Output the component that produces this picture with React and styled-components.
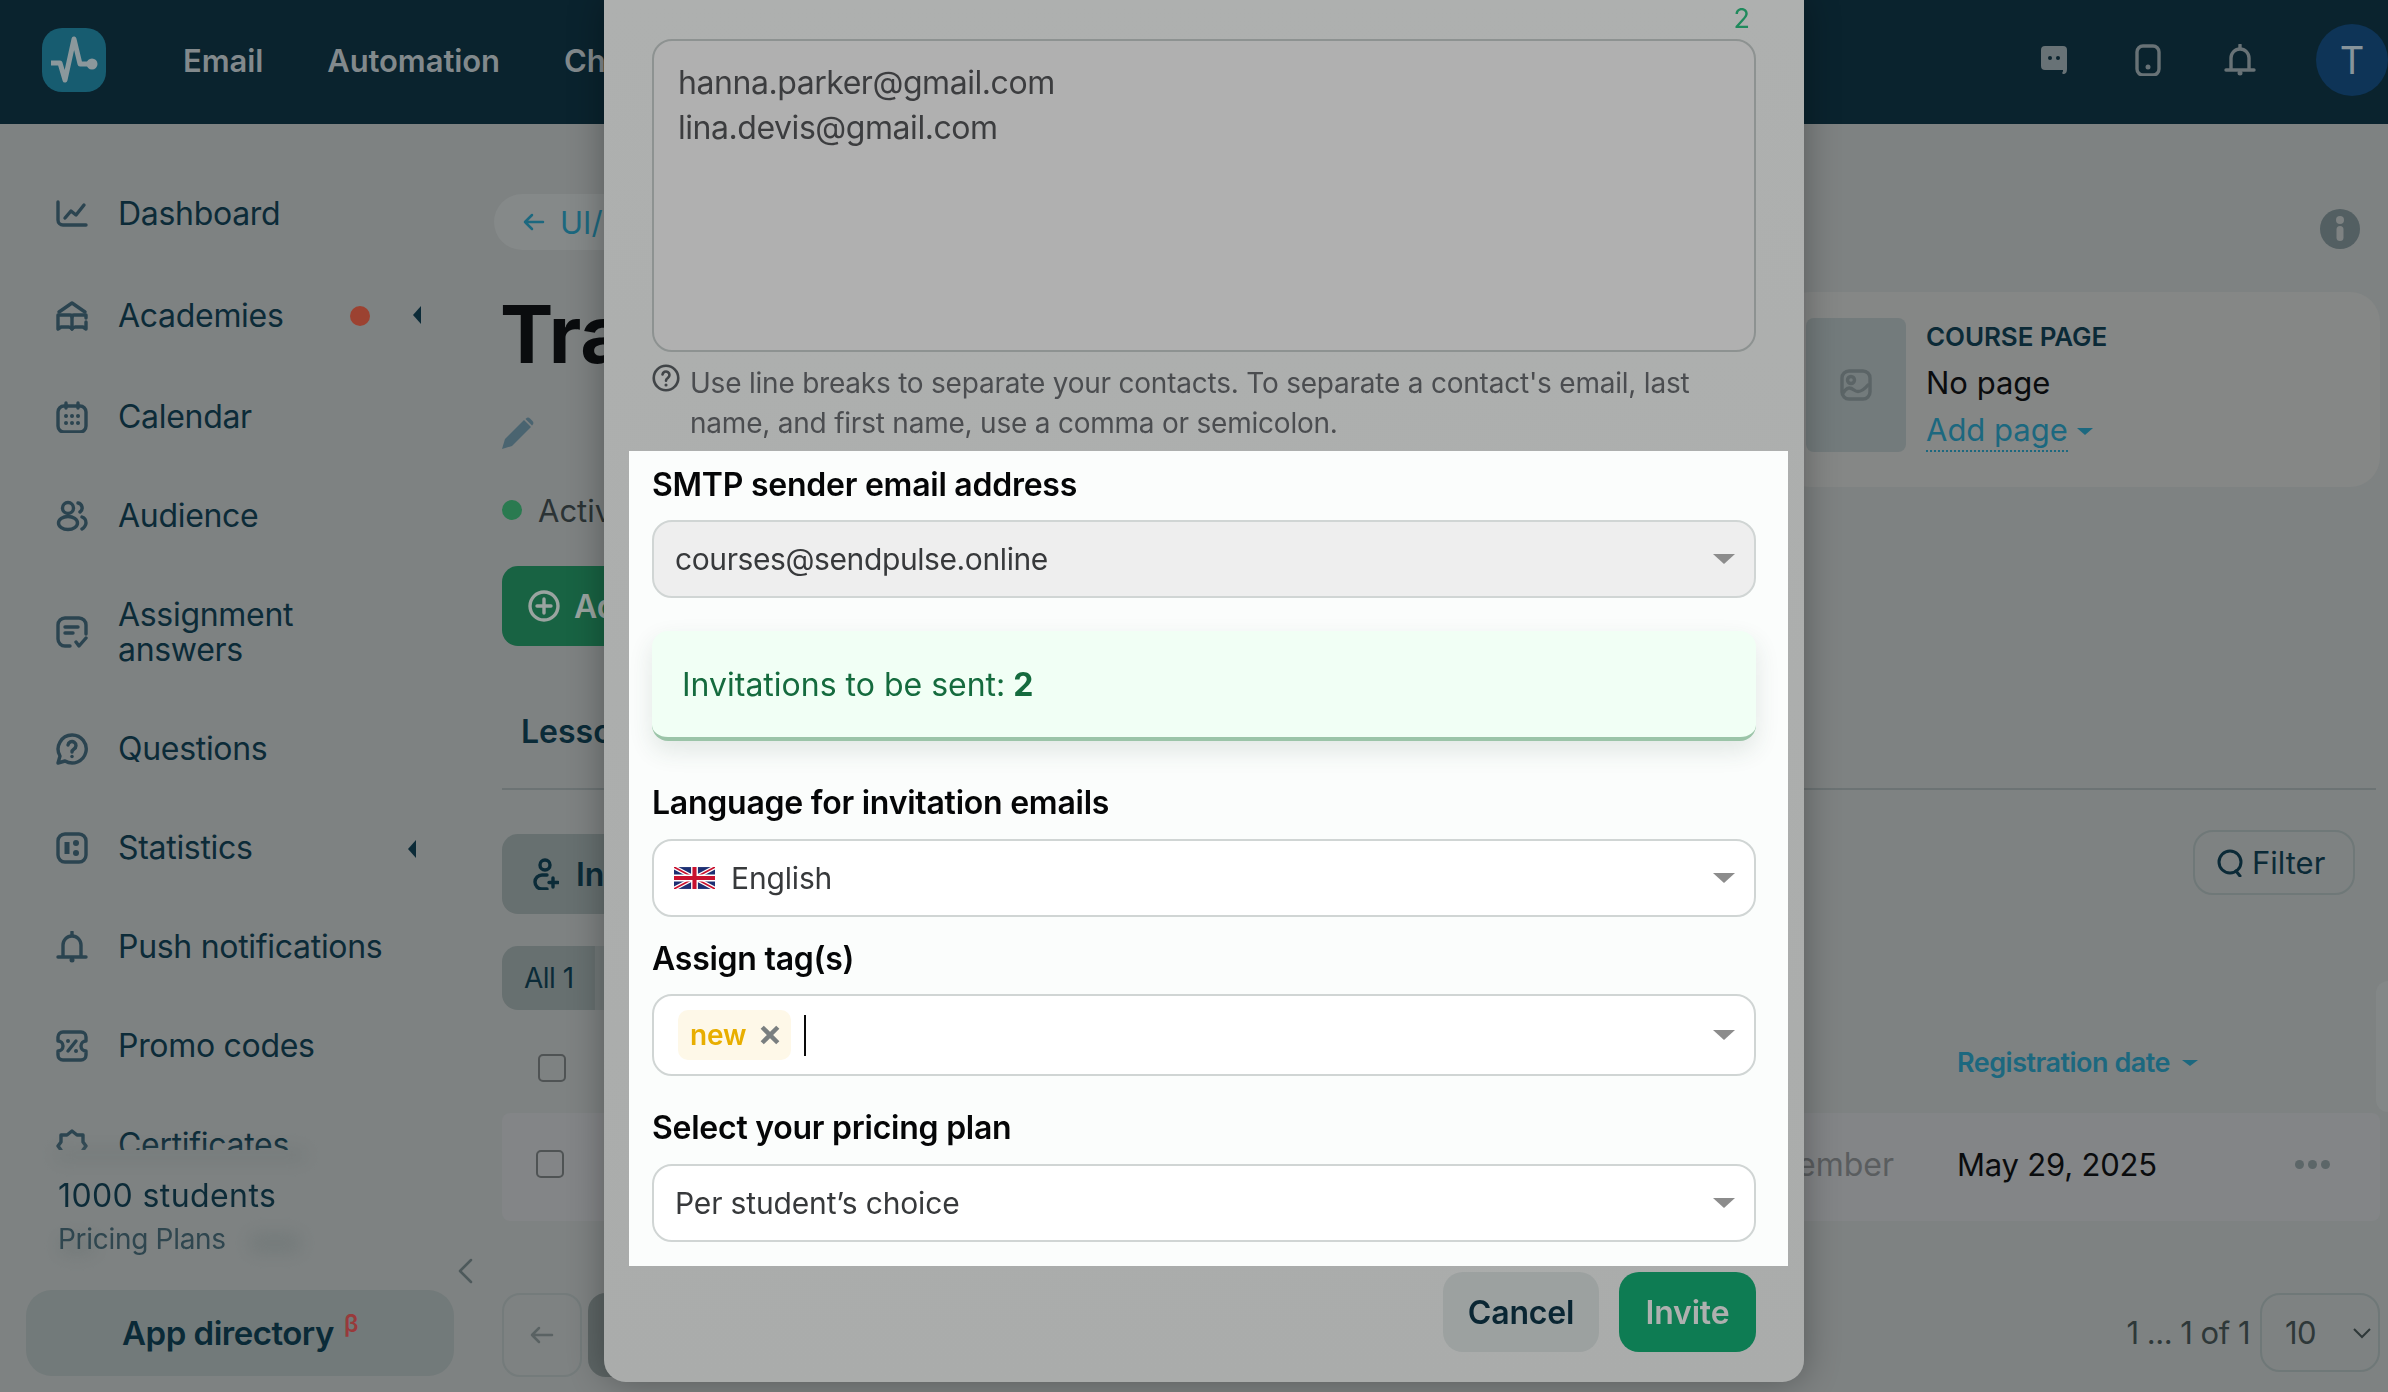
import React from 'react';
import styled, { createGlobalStyle } from 'styled-components';

const GlobalStyle = createGlobalStyle`
  html, body {
    margin: 0;
    height: 100%;
    overflow: hidden;
    background: #7e8282;
    font-family: Inter, "Noto Sans", sans-serif;
  }
  * { box-sizing: border-box; }
`;

/* ---------- page shell ---------- */

const Page = styled.div`
  width: 2388px;
  height: 1392px;
  position: relative;
  overflow: hidden;
  background: #7e8282;
`;

const Header = styled.header`
  height: 124px;
  background: #0a232e;
  display: flex;
  align-items: center;
  padding: 0 0 4px 42px;
`;

const Logo = styled.div`
  width: 64px;
  height: 64px;
  margin-right: 77px;
  border-radius: 20px;
  background: #175c70;
  color: #8b989c;
`;

const TopNav = styled.nav`
  display: flex;
  gap: 64px;
`;

const TopNavLink = styled.span`
  font-size: 31px;
  font-weight: 600;
  letter-spacing: -0.1px;
  color: #82898c;
`;

const HeaderRight = styled.div`
  margin-left: auto;
  display: flex;
  align-items: center;
  gap: 60px;
  color: #687276;
`;

const Avatar = styled.div`
  width: 72px;
  height: 72px;
  border-radius: 50%;
  background: #0e3457;
  color: #87949b;
  font-size: 38px;
  display: flex;
  align-items: center;
  justify-content: center;
`;

const Body = styled.div`
  display: flex;
  height: 1268px;
`;

/* ---------- sidebar ---------- */

const Sidebar = styled.aside`
  width: 494px;
  flex: none;
  position: relative;
  display: flex;
  flex-direction: column;
`;

const SideNav = styled.nav`
  height: 1026px;
  padding-top: 40px;
  overflow: hidden;
`;

const SideItem = styled.div`
  display: flex;
  align-items: center;
  gap: 30px;
  padding: 32px 73px 32px 56px;
  margin: ${(p) => (p.$spaced ? '3px 0 2px' : '0')};
  font-size: 32px;
  line-height: 35px;
  letter-spacing: -0.3px;
  color: #0c2b38;
  white-space: nowrap;
  svg { color: #2b4450; flex: none; }
`;

const SideLabel = styled.span`
  flex: 1;
`;

const RedDot = styled.span`
  width: 20px;
  height: 20px;
  border-radius: 50%;
  background: #9c4231;
  margin-right: 13px;
`;

const LeftCaret = styled.span`
  width: 0;
  height: 0;
  margin-right: ${(p) => p.$shift || 0}px;
  margin-top: ${(p) => p.$drop || 0}px;
  border-top: 9px solid transparent;
  border-bottom: 9px solid transparent;
  border-right: 8px solid #0c2b38;
`;

const PlanBlock = styled.div`
  position: relative;
  height: 140px;
  padding: 26px 0 0 58px;
  color: #0c2b38;
`;

const PlanTitle = styled.div`
  font-size: 32px;
  line-height: 40px;
  letter-spacing: 0.4px;
`;

const PlanLink = styled.div`
  margin-top: 5px;
  font-size: 28px;
  line-height: 36px;
  letter-spacing: -0.3px;
  color: #2f464f;
`;

const Smudge = styled.span`
  position: absolute;
  left: ${(p) => p.$x}px;
  top: ${(p) => p.$y}px;
  width: ${(p) => p.$w}px;
  height: ${(p) => p.$h}px;
  background: #6a7373;
  filter: blur(9px);
  opacity: 0.55;
  z-index: 0;
`;

const PlanText = styled.div`
  position: relative;
  z-index: 1;
`;

const AppDirectory = styled.div`
  width: 428px;
  height: 86px;
  margin-left: 26px;
  border-radius: 26px;
  background: #727a7a;
  display: flex;
  align-items: center;
  justify-content: center;
  font-size: 33px;
  font-weight: 600;
  letter-spacing: -0.5px;
  color: #0a2a37;
  sup {
    font-size: 24px;
    font-weight: 600;
    color: #983a3b;
    margin: -18px 0 0 10px;
    line-height: 1;
  }
`;

const Collapse = styled.span`
  position: absolute;
  left: 456px;
  top: 1134px;
  color: #4e595b;
`;

/* ---------- main content ---------- */

const Main = styled.main`
  flex: 1;
  min-width: 0;
  padding: 70px 8px 0 8px;
`;

const CrumbRow = styled.div`
  display: flex;
  align-items: flex-start;
  justify-content: space-between;
  height: 56px;
  margin-bottom: 36px;
  padding-right: 20px;
  margin-left: -8px;
`;

const Crumb = styled.div`
  height: 56px;
  padding: 0 28px 0 28px;
  border-radius: 28px;
  background: #858989;
  display: flex;
  align-items: center;
  gap: 14px;
  font-size: 31px;
  color: #1c687f;
`;

const InfoDot = styled.div`
  width: 40px;
  height: 40px;
  margin-top: 15px;
  color: #535f62;
`;

const HeadRow = styled.div`
  display: flex;
  justify-content: space-between;
  align-items: flex-start;
`;

const HeadLeft = styled.div`
  display: flex;
  flex-direction: column;
  align-items: flex-start;
`;

const Title = styled.h1`
  margin: 0 0 0 -2px;
  font-size: 80px;
  line-height: 96px;
  font-weight: 700;
  color: #0a0c0e;
`;

const Pencil = styled.div`
  margin-top: 35px;
  height: 32px;
  color: #4a6470;
`;

const StatusRow = styled.div`
  margin-top: 41px;
  display: flex;
  align-items: center;
  gap: 16px;
  height: 40px;
  font-size: 31px;
  color: #2b3335;
`;

const StatusDot = styled.span`
  width: 20px;
  height: 20px;
  border-radius: 50%;
  background: #2a7a50;
`;

const PrimaryGhost = styled.div`
  margin-top: 36px;
  height: 80px;
  padding: 0 60px 0 26px;
  border-radius: 16px;
  background: #186343;
  color: #9aa4a0;
  display: flex;
  align-items: center;
  gap: 14px;
  font-size: 32px;
  font-weight: 600;
`;

const CourseCard = styled.div`
  margin-top: 6px;
  width: 600px;
  height: 195px;
  border-radius: 30px;
  background: #858786;
  display: flex;
  gap: 20px;
  padding: 26px 0 0 26px;
`;

const Thumb = styled.div`
  width: 100px;
  height: 134px;
  border-radius: 8px;
  background: #737b7c;
  color: #5b6466;
  display: flex;
  align-items: center;
  justify-content: center;
`;

const CardText = styled.div`
  display: flex;
  flex-direction: column;
  margin-top: 1px;
`;

const CardLabel = styled.div`
  font-size: 26px;
  line-height: 36px;
  font-weight: 600;
  letter-spacing: -0.1px;
  color: #0b2a37;
`;

const CardValue = styled.div`
  margin-top: 8px;
  font-size: 31px;
  line-height: 40px;
  color: #0a0c0e;
`;

const AddPage = styled.div`
  margin-top: 7px;
  display: flex;
  align-items: center;
  gap: 9px;
  font-size: 31px;
  line-height: 40px;
  color: #1c687f;
`;

const AddPageText = styled.span`
  border-bottom: 2px dotted #1c687f;
`;

const DownCaret = styled.span`
  width: 0;
  height: 0;
  border-left: ${(p) => p.$w || 8}px solid transparent;
  border-right: ${(p) => p.$w || 8}px solid transparent;
  border-top: ${(p) => p.$h || 7}px solid ${(p) => p.$color || '#1c687f'};
`;

const TabsBar = styled.div`
  padding: 66px 0 36px 19px;
  border-bottom: 2px solid #6c7374;
  margin-right: 4px;
`;

const Tab = styled.span`
  font-size: 32px;
  line-height: 40px;
  font-weight: 600;
  color: #0b2b38;
  display: block;
`;

const Toolbar = styled.div`
  margin-top: 40px;
  display: flex;
  justify-content: space-between;
  align-items: flex-start;
  padding-right: 25px;
`;

const InviteGhost = styled.div`
  margin-top: 4px;
  height: 80px;
  width: 260px;
  padding-left: 31px;
  border-radius: 16px;
  background: #677070;
  color: #0b2b38;
  display: flex;
  align-items: center;
  gap: 17px;
  font-size: 32px;
  font-weight: 600;
`;

const FilterButton = styled.div`
  width: 162px;
  height: 65px;
  border: 2px solid #6f7878;
  border-radius: 20px;
  display: flex;
  align-items: center;
  gap: 9px;
  padding-left: 22px;
  font-size: 31px;
  color: #0b2a37;
`;

const FilterTabs = styled.div`
  margin-top: 32px;
  display: flex;
  height: 64px;
`;

const FilterTab = styled.div`
  width: ${(p) => (p.$active ? '93px' : '240px')};
  padding-left: 22px;
  background: ${(p) => (p.$active ? '#677070' : '#727979')};
  border-radius: ${(p) => (p.$active ? '16px 0 0 16px' : '0 16px 16px 0')};
  font-size: 28px;
  line-height: 64px;
  color: #0b2b38;
  letter-spacing: -0.5px;
`;

const TableHead = styled.div`
  height: 103px;
  display: grid;
  grid-template-columns: 1456px 1fr;
  align-items: center;
  padding-left: 36px;
`;

const Checkbox = styled.span`
  display: block;
  width: 28px;
  height: 28px;
  border: 2px solid #4f5354;
  border-radius: 5px;
  margin-top: ${(p) => p.$top || 0}px;
`;

const SortHead = styled.div`
  margin: 2px 0 0 -37px;
  display: flex;
  align-items: center;
  gap: 12px;
  font-size: 27px;
  font-weight: 600;
  letter-spacing: -0.5px;
  color: #1c687f;
`;

const TableRow = styled.div`
  height: 108px;
  width: 1878px;
  border-radius: 8px;
  background: #838587;
  display: grid;
  grid-template-columns: 1456px 1fr auto;
  align-items: center;
  padding: 0 50px 6px 0;
`;

const RowLeft = styled.div`
  display: flex;
  align-items: center;
  justify-content: space-between;
  padding: 0 64px 0 34px;
`;

const RoleCell = styled.span`
  font-size: 32px;
  color: #5a5d5f;
`;

const DateCell = styled.span`
  margin-left: -1px;
  font-size: 31px;
  letter-spacing: -0.2px;
  color: #0a0c0e;
`;

const Dots = styled.div`
  display: flex;
  gap: 4px;
`;

const Dot = styled.span`
  width: 9px;
  height: 9px;
  border-radius: 50%;
  background: #5c6668;
`;

const Pager = styled.div`
  margin-top: 72px;
  width: 1878px;
  display: flex;
  align-items: flex-start;
  gap: 6px;
`;

const PagerButton = styled.div`
  width: 80px;
  height: 84px;
  border-radius: 18px;
  border: 2px solid ${(p) => (p.$solid ? '#5d6565' : '#747b7b')};
  background: ${(p) => (p.$solid ? '#5d6565' : 'transparent')};
  color: #5a6263;
  display: flex;
  align-items: center;
  justify-content: center;
`;

const PagerInfo = styled.div`
  margin-left: auto;
  display: flex;
  gap: 10px;
  font-size: 31px;
  line-height: 79px;
  letter-spacing: -0.5px;
  color: #2e3839;
`;

const PageSize = styled.div`
  width: 120px;
  height: 79px;
  border: 2px solid #6f7878;
  border-radius: 20px;
  padding: 0 6px 0 23px;
  display: flex;
  align-items: center;
  justify-content: space-between;
  font-size: 31px;
  color: #2e3839;
`;

const SideTab = styled.div`
  position: absolute;
  right: 0;
  top: 981px;
  width: 12px;
  height: 131px;
  border-radius: 12px 0 0 12px;
  background: #838787;
`;

/* ---------- modal ---------- */

const Backdrop = styled.div`
  position: fixed;
  inset: 0;
  display: flex;
  justify-content: center;
  align-items: flex-end;
  padding: 0 0 10px 20px;
`;

const Modal = styled.div`
  width: 1200px;
  padding: 0 48px 30px;
  border-radius: 0 0 22px 22px;
  background: linear-gradient(#aeb0af, #aaacab);
  box-shadow: 0 0 36px rgba(0, 0, 0, 0.32);
`;

const Counter = styled.div`
  height: 40px;
  padding-right: 6px;
  text-align: right;
  font-size: 27px;
  line-height: 39px;
  color: #1f8a5c;
`;

const EmailsBox = styled.div`
  height: 313px;
  padding: 19px 24px;
  border: 2px solid #8d9291;
  border-radius: 20px;
  background: #b0b0b0;
  font-size: 32px;
  line-height: 45px;
  letter-spacing: -0.45px;
  color: #3c3d3f;
`;

const Hint = styled.div`
  margin-top: 11px;
  display: flex;
  gap: 10px;
  font-size: 28px;
  line-height: 40px;
  letter-spacing: -0.22px;
  color: #4b4d50;
  svg { flex: none; margin-top: 1px; color: #414548; }
`;

const Spotlight = styled.section`
  margin: 8px -32px 0 -23px;
  padding: 14px 32px 24px 23px;
  background: #fbfdfc;
`;

const FieldLabel = styled.div`
  margin-top: ${(p) => p.$top || 0}px;
  margin-bottom: ${(p) => p.$bottom ?? 16}px;
  font-size: 32px;
  line-height: 40px;
  font-weight: 600;
  letter-spacing: -0.25px;
  color: #050607;
`;

const SelectBox = styled.div`
  height: ${(p) => p.$h || 78}px;
  padding: 0 19px 0 21px;
  border: 2px solid #d0d5d4;
  border-radius: 20px;
  background: ${(p) => (p.$disabled ? '#eeeeee' : '#ffffff')};
  display: flex;
  align-items: center;
  gap: 16px;
  font-size: 30px;
  letter-spacing: ${(p) => (p.$disabled ? '-0.4px' : '-0.15px')};
  color: #37393b;
`;

const Arrow = styled.span`
  margin-left: auto;
  width: 0;
  height: 0;
  border-left: 11px solid transparent;
  border-right: 11px solid transparent;
  border-top: 10px solid #8c8c8c;
`;

const Alert = styled.div`
  margin-top: 33px;
  height: 110px;
  padding-left: 30px;
  border-radius: 16px;
  border-bottom: 4px solid #9bc4a8;
  background: #f1fff5;
  box-shadow: 0 10px 24px rgba(40, 70, 60, 0.12);
  display: flex;
  align-items: center;
  gap: 8px;
  font-size: 32px;
  color: #156b3e;
  b { font-weight: 700; }
`;

const TagChip = styled.span`
  height: 50px;
  margin-left: 3px;
  padding: 0 11px 0 12px;
  border-radius: 10px;
  background: #fef8e8;
  display: flex;
  align-items: center;
  gap: 14px;
  font-size: 28px;
  font-weight: 600;
  color: #e8ae00;
  svg { color: #7a7f80; }
`;

const Caret = styled.span`
  width: 2px;
  height: 41px;
  margin-left: -3px;
  background: #0a0a0a;
`;

const ModalFooter = styled.footer`
  margin-top: 6px;
  display: flex;
  justify-content: flex-end;
  gap: 20px;
`;

const FooterButton = styled.div`
  height: 80px;
  width: ${(p) => (p.$primary ? 137 : 156)}px;
  border-radius: 20px;
  background: ${(p) => (p.$primary ? '#0e7c53' : '#9ca1a0')};
  color: ${(p) => (p.$primary ? '#aeb0af' : '#0a2633')};
  display: flex;
  align-items: center;
  justify-content: center;
  font-size: 32px;
  font-weight: 600;
  letter-spacing: -0.2px;
`;

const FlagBox = styled.span`
  display: flex;
  margin-left: -1px;
`;

/* ---------- drawings ---------- */

const Ico = ({ children, size = 32, sw = 3.4 }) => (
  <svg width={size} height={size} viewBox="0 0 32 32" fill="none" stroke="currentColor" strokeWidth={sw} strokeLinecap="round" strokeLinejoin="round">
    {children}
  </svg>
);

const LogoMark = () => (
  <svg width="64" height="64" viewBox="0 0 64 64" fill="none" stroke="currentColor" strokeWidth="5" strokeLinejoin="round">
    <path d="M9 35h9l5 17 9-41 6 25h12" />
    <circle cx="50" cy="36" r="5.5" fill="currentColor" stroke="none" />
  </svg>
);

const ChatIcon = () => (
  <svg width="32" height="32" viewBox="0 0 32 32">
    <path fill="currentColor" d="M5 2h18a4 4 0 0 1 4 4v19c0 3-1 5-4 5l-1-1c1-1 1-2 1-3h-5H5a4 4 0 0 1-4-4V6a4 4 0 0 1 4-4z" />
    <circle cx="10" cy="14" r="2" fill="#0a232e" />
    <circle cx="18" cy="14" r="2" fill="#0a232e" />
  </svg>
);

const PhoneIcon = () => (
  <Ico>
    <rect x="5" y="2" width="22" height="29" rx="6" />
    <circle cx="16" cy="23" r="2.5" fill="currentColor" stroke="none" />
  </Ico>
);

const BellIcon = () => (
  <Ico>
    <path d="M7 25V14a9 9 0 0 1 18 0v11" />
    <path d="M2 26h28" />
    <path d="M16 1v3" />
    <circle cx="16" cy="29" r="2.5" fill="currentColor" stroke="none" />
  </Ico>
);

const DashIcon = () => (
  <Ico>
    <path d="M2 4v18a5 5 0 0 0 5 5h23" />
    <path d="M9 20l6-7 5 4 8-10" />
  </Ico>
);

const AcademyIcon = () => (
  <Ico>
    <path d="M3 12L16 3l13 9" />
    <path d="M2 29V15h12a2 2 0 0 1 2 2v12a4 4 0 0 0-4-2H5z" />
    <path d="M30 22v7l-3-2h-7a4 4 0 0 0-4 2" />
    <path d="M30 18v-3H18a2 2 0 0 0-2 2" />
  </Ico>
);

const CalendarIcon = () => (
  <Ico>
    <rect x="2" y="5" width="28" height="26" rx="6" />
    <path d="M10 2v5M22 2v5" />
    <path d="M10 15h.01M16 15h.01M22 15h.01M10 22h.01M16 22h.01M22 22h.01" strokeWidth="4" />
  </Ico>
);

const AudienceIcon = () => (
  <Ico>
    <circle cx="12" cy="8" r="5.5" />
    <ellipse cx="12" cy="23" rx="9.5" ry="6.5" />
    <path d="M22 3a5 5 0 0 1 2 9M26 17c3 1 4 4 4 6s-2 5-4 6" />
  </Ico>
);

const AssignmentIcon = () => (
  <Ico>
    <path d="M14 30H9a7 7 0 0 1-7-7V9a7 7 0 0 1 7-7h14a7 7 0 0 1 7 7v9" />
    <path d="M9 11h13M9 17h8" />
    <path d="M20 26l3 4 7-8" />
  </Ico>
);

const QuestionIcon = () => (
  <Ico>
    <path d="M16 2a14 14 0 1 1-7 26l-7 2 2-7A14 14 0 0 1 16 2z" />
    <path d="M12 12a4 4 0 1 1 6 4c-1.500 1-2 1.500-2 3" />
    <path d="M16 23.500h.01" strokeWidth="3.5" />
  </Ico>
);

const StatsIcon = () => (
  <Ico>
    <rect x="2" y="2" width="28" height="28" rx="7" />
    <path d="M11 10v12" strokeWidth="5" strokeLinecap="butt" />
    <circle cx="20" cy="11" r="3" fill="currentColor" stroke="none" />
    <circle cx="20" cy="21" r="3" fill="currentColor" stroke="none" />
  </Ico>
);

const PromoIcon = () => (
  <Ico>
    <path d="M7 2h18a5 5 0 0 1 5 5v4a5 5 0 0 0 0 10v4a5 5 0 0 1-5 5H7a5 5 0 0 1-5-5v-4a5 5 0 0 0 0-10V7a5 5 0 0 1 5-5z" />
    <path d="M20 11l-8 10" />
    <path d="M12 11h.01M20 21h.01" strokeWidth="4" />
  </Ico>
);

const CertIcon = () => (
  <Ico>
    <path d="M16 2l5 4h6v7l3 4-3 4v7h-6l-5 4-5-4H5v-7l-3-4 3-4V6h6z" />
  </Ico>
);

const Flag = () => (
  <svg width="41" height="22" viewBox="0 0 60 32">
    <rect width="60" height="32" fill="#1d2f73" />
    <path d="M0 0l60 32M60 0L0 32" stroke="#fff" strokeWidth="6" />
    <path d="M0 0l60 32M60 0L0 32" stroke="#c8102e" strokeWidth="2.500" />
    <path d="M30 0v32M0 16h60" stroke="#fff" strokeWidth="10" />
    <path d="M30 0v32M0 16h60" stroke="#c8102e" strokeWidth="6" />
  </svg>
);

export default function App() {
  return (
    <Page>
      <GlobalStyle />
      <Header>
        <Logo><LogoMark /></Logo>
        <TopNav>
          <TopNavLink>Email</TopNavLink>
          <TopNavLink>Automation</TopNavLink>
          <TopNavLink>Chatbots</TopNavLink>
        </TopNav>
        <HeaderRight>
          <ChatIcon />
          <PhoneIcon />
          <BellIcon />
          <Avatar>T</Avatar>
        </HeaderRight>
      </Header>

      <Body>
        <Sidebar>
          <SideNav>
            <SideItem><DashIcon /><SideLabel>Dashboard</SideLabel></SideItem>
            <SideItem $spaced><AcademyIcon /><SideLabel>Academies</SideLabel><RedDot /><LeftCaret $drop={-2} /></SideItem>
            <SideItem><CalendarIcon /><SideLabel>Calendar</SideLabel></SideItem>
            <SideItem><AudienceIcon /><SideLabel>Audience</SideLabel></SideItem>
            <SideItem><AssignmentIcon /><SideLabel>Assignment<br />answers</SideLabel></SideItem>
            <SideItem><QuestionIcon /><SideLabel>Questions</SideLabel></SideItem>
            <SideItem><StatsIcon /><SideLabel>Statistics</SideLabel><LeftCaret $shift={5} $drop={3} /></SideItem>
            <SideItem><BellIcon /><SideLabel>Push notifications</SideLabel></SideItem>
            <SideItem><PromoIcon /><SideLabel>Promo codes</SideLabel></SideItem>
            <SideItem><CertIcon /><SideLabel>Certificates</SideLabel></SideItem>
          </SideNav>
          <PlanBlock>
            <Smudge $x={56} $y={0} $w={250} $h={10} />
            <Smudge $x={60} $y={88} $w={34} $h={16} />
            <Smudge $x={250} $y={84} $w={50} $h={18} />
            <PlanText>
              <PlanTitle>1000 students</PlanTitle>
              <PlanLink>Pricing Plans</PlanLink>
            </PlanText>
          </PlanBlock>
          <AppDirectory>App directory<sup>β</sup></AppDirectory>
          <Collapse>
            <svg width="20" height="26" viewBox="0 0 20 26" fill="none" stroke="currentColor" strokeWidth="2.500" strokeLinecap="round" strokeLinejoin="round">
              <path d="M15 2L4 13l11 11" />
            </svg>
          </Collapse>
        </Sidebar>

        <Main>
          <CrumbRow>
            <Crumb>
              <svg width="24" height="24" viewBox="0 0 24 24" fill="none" stroke="currentColor" strokeWidth="2.500" strokeLinecap="round" strokeLinejoin="round">
                <path d="M21 12H3M10 5l-7 7 7 7" />
              </svg>
              UI/UX
            </Crumb>
            <InfoDot>
              <svg width="40" height="40" viewBox="0 0 40 40">
                <circle cx="20" cy="20" r="20" fill="currentColor" />
                <circle cx="20" cy="11" r="4" fill="#7e8282" />
                <rect x="16.500" y="17" width="7" height="15" rx="3.500" fill="#7e8282" />
              </svg>
            </InfoDot>
          </CrumbRow>

          <HeadRow>
            <HeadLeft>
              <Title>Training</Title>
              <Pencil>
                <svg width="32" height="32" viewBox="0 0 32 32" fill="currentColor">
                  <path d="M0 32l3-10L22 3l7 7L10 29z" />
                  <path d="M24 1.500a3 3 0 0 1 4 0l2.500 2.500a3 3 0 0 1 0 4L30 8.500 23.500 2z" />
                </svg>
              </Pencil>
              <StatusRow><StatusDot />Active</StatusRow>
              <PrimaryGhost>
                <Ico size={32}>
                  <circle cx="16" cy="16" r="14" />
                  <path d="M16 9v14M9 16h14" />
                </Ico>
                Add lesson
              </PrimaryGhost>
            </HeadLeft>
            <CourseCard>
              <Thumb>
                <Ico>
                  <rect x="2" y="2" width="28" height="28" rx="7" />
                  <circle cx="11" cy="11" r="3.500" />
                  <path d="M3 24c4-6 7-6 11-3s8 2 14-5" />
                </Ico>
              </Thumb>
              <CardText>
                <CardLabel>COURSE PAGE</CardLabel>
                <CardValue>No page</CardValue>
                <AddPage><AddPageText>Add page</AddPageText><DownCaret /></AddPage>
              </CardText>
            </CourseCard>
          </HeadRow>

          <TabsBar><Tab>Lessons</Tab></TabsBar>

          <Toolbar>
            <InviteGhost>
              <svg width="26" height="32" viewBox="0 0 26 32" fill="none" stroke="currentColor" strokeWidth="3.400" strokeLinecap="round">
                <circle cx="12" cy="7" r="5" />
                <path d="M14 17H9a7 7 0 0 0 0 14h5" />
                <path d="M20 20v9M16 24.500h9" />
              </svg>
              Invite
            </InviteGhost>
            <FilterButton>
              <svg width="26" height="28" viewBox="0 0 26 28" fill="none" stroke="currentColor" strokeWidth="3" strokeLinecap="round">
                <circle cx="13" cy="13" r="11" />
                <path d="M19 22l4 5" />
              </svg>
              Filter
            </FilterButton>
          </Toolbar>

          <FilterTabs>
            <FilterTab $active>All 1</FilterTab>
            <FilterTab />
          </FilterTabs>

          <TableHead>
            <Checkbox $top={12} />
            <SortHead>Registration date<DownCaret $w={8} $h={6} /></SortHead>
          </TableHead>

          <TableRow>
            <RowLeft>
              <Checkbox />
              <RoleCell>Member</RoleCell>
            </RowLeft>
            <DateCell>May 29, 2025</DateCell>
            <Dots><Dot /><Dot /><Dot /></Dots>
          </TableRow>

          <Pager>
            <PagerButton>
              <svg width="24" height="24" viewBox="0 0 24 24" fill="none" stroke="currentColor" strokeWidth="2.500" strokeLinecap="round" strokeLinejoin="round">
                <path d="M22 12H2M9 5l-7 7 7 7" />
              </svg>
            </PagerButton>
            <PagerButton $solid />
            <PagerInfo>
              1 ... 1 of 1
              <PageSize>
                10
                <svg width="20" height="12" viewBox="0 0 20 12" fill="none" stroke="currentColor" strokeWidth="2">
                  <path d="M2 2l8 8 8-8" />
                </svg>
              </PageSize>
            </PagerInfo>
          </Pager>
        </Main>
      </Body>
      <SideTab />

      <Backdrop>
        <Modal>
          <Counter>2</Counter>
          <EmailsBox>
            hanna.parker@gmail.com
            <br />
            lina.devis@gmail.com
          </EmailsBox>
          <Hint>
            <Ico size={28} sw={3}>
              <circle cx="16" cy="16" r="14" />
              <path d="M12 12a4 4 0 1 1 6 4c-1.500 1-2 1.500-2 3" />
              <path d="M16 24h.01" strokeWidth="3.500" />
            </Ico>
            <span>
              Use line breaks to separate your contacts. To separate a contact's email, last name, and first name, use a comma or semicolon.
            </span>
          </Hint>

          <Spotlight>
            <FieldLabel $bottom={15}>SMTP sender email address</FieldLabel>
            <SelectBox $disabled>courses@sendpulse.online<Arrow /></SelectBox>
            <Alert>Invitations to be sent: <b>2</b></Alert>
            <FieldLabel $top={42}>Language for invitation emails</FieldLabel>
            <SelectBox><FlagBox><Flag /></FlagBox>English<Arrow /></SelectBox>
            <FieldLabel $top={22} $bottom={15}>Assign tag(s)</FieldLabel>
            <SelectBox $h={82}>
              <TagChip>
                new
                <svg width="20" height="20" viewBox="0 0 18 18" stroke="currentColor" strokeWidth="4">
                  <path d="M2 2l14 14M16 2L2 16" />
                </svg>
              </TagChip>
              <Caret />
              <Arrow />
            </SelectBox>
            <FieldLabel $top={32}>Select your pricing plan</FieldLabel>
            <SelectBox>Per student’s choice<Arrow /></SelectBox>
          </Spotlight>

          <ModalFooter>
            <FooterButton>Cancel</FooterButton>
            <FooterButton $primary>Invite</FooterButton>
          </ModalFooter>
        </Modal>
      </Backdrop>
    </Page>
  );
}
